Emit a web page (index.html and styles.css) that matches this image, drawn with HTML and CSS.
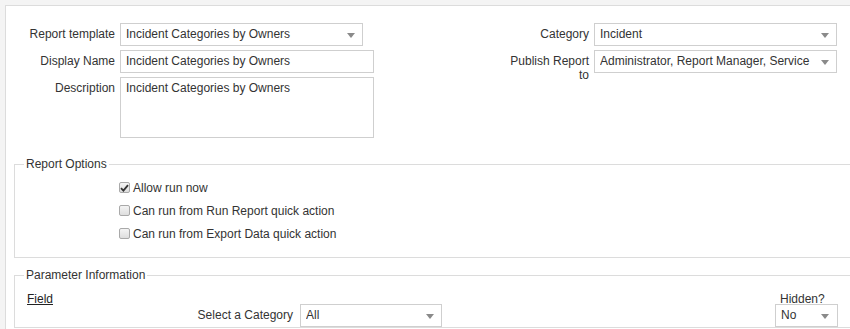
FILE: index.html
```html
<!DOCTYPE html>
<html lang="en">
<head>
    <meta charset="UTF-8">
    <title>Report Definition</title>
    <link rel="stylesheet" href="styles.css">
</head>
<body>
    <!-- Report panel -->
    <div class="panel">
        <div class="top-fields">
            <div class="form-grid form-left">
                <label class="lbl">Report template</label>
                <div class="select sel-wide"><span>Incident Categories by Owners</span><i class="arrow"></i></div>

                <label class="lbl">Display Name</label>
                <div class="input">Incident Categories by Owners</div>

                <label class="lbl">Description</label>
                <div class="input textarea">Incident Categories by Owners</div>
            </div>

            <div class="form-grid form-right">
                <label class="lbl">Category</label>
                <div class="select"><span>Incident</span><i class="arrow"></i></div>

                <label class="lbl lbl-wrap">Publish Report to</label>
                <div class="select"><span>Administrator, Report Manager, Service</span><i class="arrow"></i></div>
            </div>
        </div>

        <!-- Report Options -->
        <fieldset class="group options">
            <legend>Report Options</legend>
            <div class="check-row"><span class="check"><svg width="9" height="8" viewBox="0 0 9 8"><path d="M1 4.2 L3.4 6.6 L8 1.2" fill="none" stroke="#333" stroke-width="1.8"/></svg></span>Allow run now</div>
            <div class="check-row"><span class="check"></span>Can run from Run Report quick action</div>
            <div class="check-row"><span class="check"></span>Can run from Export Data quick action</div>
        </fieldset>

        <!-- Parameter Information -->
        <fieldset class="group params">
            <legend>Parameter Information</legend>
            <div class="param-head">
                <a class="field-link">Field</a>
                <span class="hidden-head">Hidden?</span>
            </div>
            <div class="param-row">
                <label class="lbl param-lbl">Select a Category</label>
                <div class="select sel-param"><span>All</span><i class="arrow"></i></div>
                <div class="select sel-hidden"><span>No</span><i class="arrow"></i></div>
            </div>
        </fieldset>
    </div>
</body>
</html>
```

FILE: styles.css
```css
/* General */
html, body {
    overflow: hidden;
}

body {
    margin: 0;
    background: #f4f4f4;
    font-family: 'Liberation Sans', Arial, sans-serif;
    font-size: 12px;
    color: #333;
    height: 329px;
}

/* Panel */
.panel {
    margin: 5px -40px 0 5px;
    background: #fff;
    border: 1px solid #dcdcdc;
    border-right: none;
    padding-top: 17px;
    height: 400px;
}

.top-fields {
    display: flex;
    align-items: flex-start;
    width: 831px;
}

.form-grid {
    display: grid;
    column-gap: 5px;
    row-gap: 4px;
    align-items: start;
    align-content: start;
}

.form-left {
    grid-template-columns: 109px 254px;
}

.form-right {
    grid-template-columns: 88px 243px;
    margin-left: auto;
}

.lbl {
    text-align: right;
    line-height: 14px;
    padding-top: 4px;
    white-space: nowrap;
}

.lbl-wrap {
    white-space: normal;
}

/* Controls */
.select,
.input {
    box-sizing: border-box;
    height: 23px;
    border: 1px solid #cfcfcf;
    background: #fff;
    padding: 0 5px;
    line-height: 21px;
    white-space: nowrap;
    overflow: hidden;
}

.select {
    display: flex;
    align-items: center;
    width: 243px;
}

.select span {
    flex: 1;
    overflow: hidden;
}

.arrow {
    width: 0;
    height: 0;
    border-left: 4px solid transparent;
    border-right: 4px solid transparent;
    border-top: 5px solid #8a8a8a;
    margin: 1px 2px 0 4px;
}

.textarea {
    height: 61px;
    line-height: 14px;
    padding-top: 3px;
}

/* Fieldsets */
.group {
    border: 1px solid #dcdcdc;
    margin: 0 0 0 8px;
    padding: 0;
}

.group legend {
    padding: 0 2px;
    margin-left: 9px;
    line-height: 14px;
}

.options {
    margin-top: 19px;
    padding: 5px 0 12px 0;
}

.check-row {
    display: flex;
    align-items: center;
    height: 23px;
    padding-left: 104px;
}

.check {
    box-sizing: border-box;
    width: 11px;
    height: 11px;
    border: 1px solid #a9a9a9;
    border-radius: 2px;
    background: linear-gradient(#f4f4f4, #dedede);
    margin-right: 3px;
    display: flex;
    align-items: center;
    justify-content: center;
}

.params {
    margin-top: 10px;
    padding-top: 8px;
}

.param-head {
    display: flex;
    align-items: flex-end;
    width: 823px;
    height: 16px;
}

.field-link {
    text-decoration: underline;
    margin-left: 12px;
    color: #222;
}

.hidden-head {
    margin-left: auto;
    width: 58px;
}

.param-row {
    display: flex;
    align-items: flex-start;
    width: 823px;
    margin-top: -2px;
}

.param-lbl {
    width: 278px;
}

.sel-param {
    width: 142px;
    margin-left: 7px;
}

.sel-hidden {
    width: 63px;
    margin-left: auto;
    padding-right: 6px;
}
```
